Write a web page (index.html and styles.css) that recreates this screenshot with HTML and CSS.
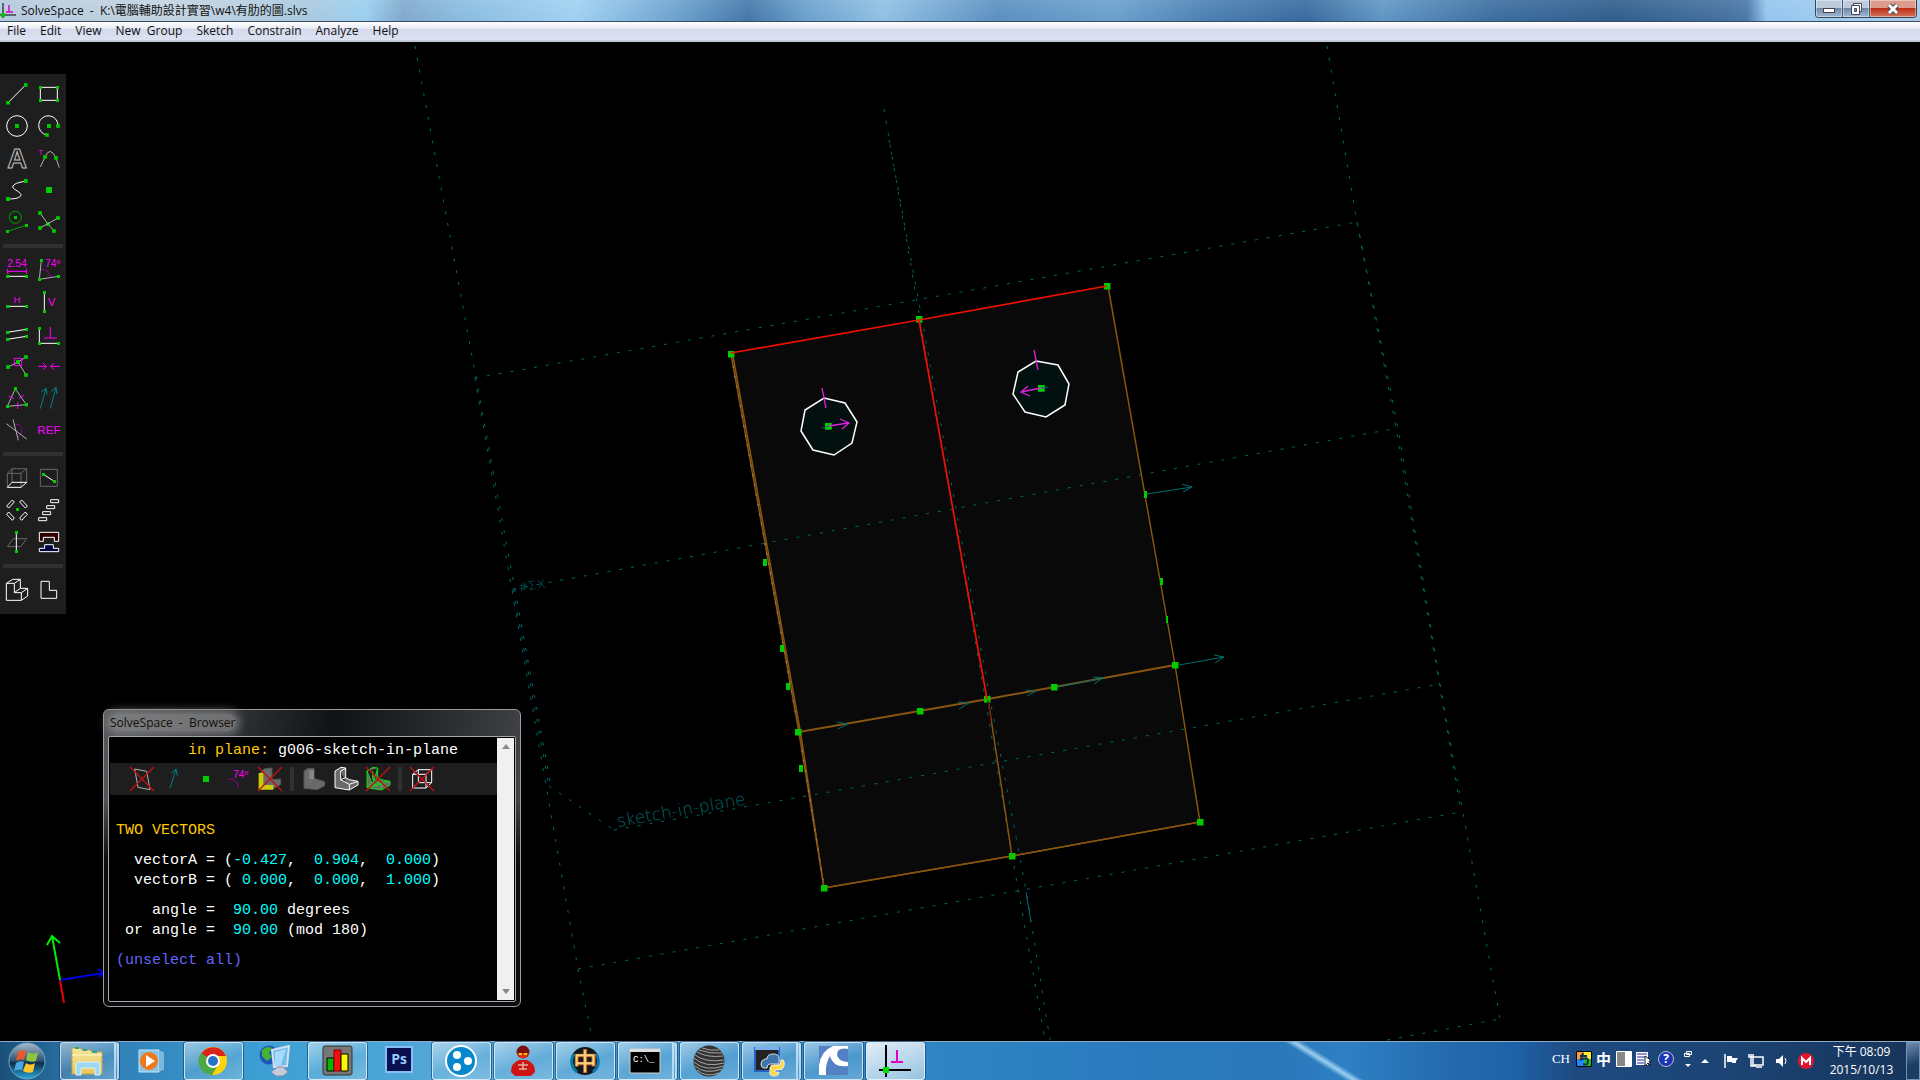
FILE: index.html
```html
<!DOCTYPE html>
<html lang="zh-Hant">
<head>
<meta charset="utf-8">
<meta name="viewport" content="width=device-width, initial-scale=1">
<title>SolveSpace - K:\電腦輔助設計實習\w4\有肋的圖.slvs</title>
<link rel="stylesheet" href="styles.css">
</head>
<body>
<svg class="defs" width="0" height="0" aria-hidden="true">
  <defs>
    <marker id="node" viewBox="0 0 12 12" refX="6" refY="6" markerWidth="11" markerHeight="11" markerUnits="userSpaceOnUse"><path d="M0 0h12v12H0z" fill="#00cc00"/></marker>
    <marker id="pin" viewBox="0 0 8 8" refX="4" refY="4" markerWidth="7" markerHeight="7" markerUnits="userSpaceOnUse"><path d="M0 0h8v8H0z" fill="#00cc00"/></marker>
    <linearGradient id="orb" x2="0" y2="1"><stop offset="0" stop-color="#a9bccb"/><stop offset=".5" stop-color="#2d4f6e"/><stop offset=".55" stop-color="#0b2c49"/><stop offset="1" stop-color="#2ca9dd"/></linearGradient>
    <linearGradient id="folder" x2="0" y2="1"><stop offset="0" stop-color="#f6e79d"/><stop offset="1" stop-color="#e9c75b"/></linearGradient>
  </defs>
</svg>

<header class="titlebar">
  <svg class="app-icon" viewBox="0 0 16 16" aria-hidden="true"><path d="M3 0v15M0 12h16" stroke="#000" fill="none"/><path d="M9 2v7M6 9h7" stroke="#e000c8" stroke-width="1.5" fill="none"/><path d="M1 10h4v4H1z" fill="#0c0"/></svg>
  <h1 class="caption">SolveSpace&nbsp; -&nbsp; K:\電腦輔助設計實習\w4\有肋的圖.slvs</h1>
  <div class="window-controls">
    <button type="button" class="wc" aria-label="Minimize"><svg viewBox="0 0 16 12"><rect x="2.500" y="5.500" width="11" height="4" fill="#fff" stroke="#445"/></svg></button>
    <button type="button" class="wc" aria-label="Restore"><svg viewBox="0 0 16 12"><path d="M5.500 .5h8v8h-8z" fill="#fff" stroke="#445"/><path d="M3.500 2.500h8v9h-8z" fill="#fff" stroke="#445"/><path d="M6.500 5.500h2v3h-2z" fill="#7a8fae" stroke="#445"/></svg></button>
    <button type="button" class="wc wc-close" aria-label="Close"><svg viewBox="0 0 16 12"><path d="M4 2l8 8M12 2l-8 8" stroke="#445" stroke-width="5"/><path d="M4 2l8 8M12 2l-8 8" stroke="#fff" stroke-width="3"/></svg></button>
  </div>
</header>

<nav class="menubar" aria-label="Menu">
  <button type="button">File</button><button type="button">Edit</button><button type="button">View</button><button type="button">New&nbsp; Group</button><button type="button">Sketch</button><button type="button">Constrain</button><button type="button">Analyze</button><button type="button">Help</button>
</nav>

<main class="workspace">
  <svg class="scene" viewBox="0 42 1920 999" preserveAspectRatio="xMinYMin slice" role="img" aria-label="Sketch of ribbed plate">
    <path d="M731 354L1108 286L1200 822L824 888z" fill="#090909"/>
    <g class="axes">
      <path d="M415 46L551 786"/><path d="M475 378L578 969L592 1038"/><path d="M513 589L549 786"/>
      <path d="M475 378L1357 222"/><path d="M513 589L1398 428"/><path d="M614 830L1440 684"/><path d="M578 969L1461 812"/><path d="M1387 1040L1500 1019"/>
      <path d="M1327 46L1357 222L1398 428L1440 684L1500 1019"/><path d="M1357 222L1396 428L1461 812"/>
      <path d="M884 109L920 319L1012 855L1045 1040"/><path d="M889 140L922 319L990 699L1026 890L1050 1040"/>
      <path d="M549 786L614 830"/>
    </g>
    <path d="M1026 892L1031 922" class="teal"/>
    <text class="scene-text" font-size="17" transform="translate(618 827) rotate(-10)">sketch-in-plane</text>
    <g class="scene-text" font-size="12"><text transform="translate(519 592) rotate(-10)">#Σ</text><text transform="translate(538 589) rotate(-10)">X</text></g>
    <g class="edge">
      <path d="M731 354L799 732L824 888L1012 856L1200 822L1175 665L1108 286"/>
      <path d="M824 888L1012 856L1200 822"/>
      <path d="M799 732L988 699L1175 665" stroke-width="2"/><path d="M988 699L1012 856"/><path d="M733 356L801 735L824 888"/>
    </g>
    <path d="M733 366L796 716M802 750L823 880" stroke="#a58a60" stroke-dasharray="2 8" fill="none"/>
    <g fill="#021010" stroke="#fff" stroke-width="1.500">
      <path d="M824 398L845 403L857 422L852 443L834 455L813 450L801 431L805 410z"/>
      <path d="M1036 361L1058 365L1069 384L1065 405L1046 417L1025 412L1013 394L1018 372z"/>
    </g>
    <g fill="#00cc00">
      <path d="M763 559h4v7h-4zM780 645h4v7h-4zM786 683h4v7h-4zM799 765h4v7h-4zM1144 491h3v7h-3zM1160 578h3v7h-3zM1166 616h2v7h-2z"/>
    </g>
    <g class="pins">
      <path d="M731 354L919 319L1107 286L1175 665L1200 822L1012 856L824 888L798 732L920 711L987 699L1054 687"/>
      <path d="M828 426L828 426"/><path d="M1041 388L1041 388"/>
    </g>
    <path d="M731 353L919 320L1107 286M919 320L987 699" fill="none" stroke="#f01000" stroke-width="1.700"/>
    <path d="M988 700L991 722" stroke="#600"/>
    <g class="teal">
      <path d="M1147 494L1192 487M1182 484L1192 487L1183 492"/><path d="M1179 665L1224 657M1214 655L1224 657L1215 663"/>
      <path d="M837 722L848 724L838 729M958 702L969 703L959 709M1026 690L1036 691L1027 696M1058 687L1103 678L1093 677M1103 678L1094 684"/>
      <path d="M822 428L829 426M1041 388L1048 387"/>
    </g>
    <g fill="none" stroke="#e020e0" stroke-width="1.300">
      <path d="M829 426L848 423M840 419L849 423L842 429M822 388L826 408"/>
      <path d="M1041 388L1021 392M1028 386L1021 392L1030 396M1034 350L1038 370"/>
    </g>
    <g fill="none" stroke-width="2"><path d="M60 980L64 1003" stroke="#e00"/><path d="M60 980L104 973M98 969L104 973L99 977" stroke="#0000e0"/><path d="M60 980L52 936M47 945L52 936L60 943" stroke="#00ee00"/></g>
  </svg>

  <div class="toolbar" role="toolbar" aria-label="Sketch tools">
    <div class="tool-group">
      <button type="button" aria-label="Line"><svg viewBox="0 0 96 96"><path class="n" d="M21 74L74 21"/></svg></button>
      <button type="button" aria-label="Rectangle"><svg viewBox="0 0 96 96"><path class="n" d="M22 28H73V67H22V28"/></svg></button>
      <button type="button" aria-label="Circle"><svg viewBox="0 0 96 96"><circle cx="48" cy="48" r="31"/><path class="n" d="M48 48h0"/></svg></button>
      <button type="button" aria-label="Arc"><svg viewBox="0 0 96 96"><path class="n" d="M75 48A29 29 0 1 0 42 75"/><path class="n" d="M48 48h0"/></svg></button>
      <button type="button" aria-label="Text"><svg viewBox="0 0 96 96"><text class="letter" x="48" y="79" font-size="82">A</text></svg></button>
      <button type="button" aria-label="Tangent arc"><svg viewBox="0 0 96 96"><path class="g" d="M22 75L36 45Q51 10 69 48L79 77"/><path class="n bare" d="M36 45L69 48"/><text class="label" x="23" y="38" font-size="24">T</text></svg></button>
      <button type="button" aria-label="Bezier"><svg viewBox="0 0 96 96"><path class="n" d="M21 75C42 75 60 72 60 62C58 52 30 45 36 36C42 26 60 25 74 21"/><path class="n bare" d="M21 75L74 21"/></svg></button>
      <button type="button" aria-label="Point"><svg viewBox="0 0 96 96"><path class="solid" d="M39 39h18v18H39z"/></svg></button>
      <button type="button" aria-label="Toggle construction"><svg viewBox="0 0 96 96"><circle class="green" cx="43" cy="34" r="18"/><path class="n green" d="M19 76L76 58"/><path class="n" d="M43 34h0"/></svg></button>
      <button type="button" aria-label="Split curves"><svg viewBox="0 0 96 96"><path class="n g" d="M21 21L45 54L63 75"/><path class="n g" d="M21 66L75 36"/></svg></button>
    </div>
    <div class="tool-group">
      <button type="button" aria-label="Distance"><svg viewBox="0 0 96 96"><text class="label" x="48" y="39" font-size="30">2.54</text><path class="m" d="M19 52H76M19 44V60M76 44V60"/><path class="n" d="M19 67H76"/></svg></button>
      <button type="button" aria-label="Angle"><svg viewBox="0 0 96 96"><path class="n g" d="M25 19L19 76L76 67"/><path class="m dim" d="M25 46Q46 44 53 70"/><text class="label" x="59" y="40" font-size="30">74º</text></svg></button>
      <button type="button" aria-label="Horizontal"><svg viewBox="0 0 96 96"><text class="label" x="48" y="51" font-size="29">H</text><path class="n" d="M19 61H76"/></svg></button>
      <button type="button" aria-label="Vertical"><svg viewBox="0 0 96 96"><path class="n" d="M34 19V76"/><text class="label" x="56" y="60" font-size="33">V</text></svg></button>
      <button type="button" aria-label="Parallel"><svg viewBox="0 0 96 96"><path class="n" d="M19 43L76 34"/><path class="n" d="M19 64L76 55"/></svg></button>
      <button type="button" aria-label="Perpendicular"><svg viewBox="0 0 96 96"><path class="n" d="M19 31V76H76"/><path class="m" d="M52 27V60M33 60H72"/></svg></button>
      <button type="button" aria-label="Point on line"><svg viewBox="0 0 96 96"><path class="n g" d="M21 51L51 36L75 21"/><path class="n g" d="M51 36L75 75"/><path class="m" d="M40 25H62V47H40z"/></svg></button>
      <button type="button" aria-label="Symmetric"><svg viewBox="0 0 96 96"><path class="m" d="M15 49H40M30 39L40 49L30 59M81 49H53M63 39L53 49L63 59"/></svg></button>
      <button type="button" aria-label="Equal"><svg viewBox="0 0 96 96"><path class="n g" d="M43 20L19 73L76 68L43 20"/><path class="m" d="M23 42L39 50M53 50L70 39M50 61V81"/></svg></button>
      <button type="button" aria-label="Oriented same"><svg viewBox="0 0 96 96"><path class="t" d="M22 80L39 19M24 31L39 19L42 38M52 80L69 16M54 29L69 16L72 36"/></svg></button>
      <button type="button" aria-label="Other angle"><svg viewBox="0 0 96 96"><path class="m dim" d="M39 31C64 27 72 55 48 70"/><path class="g" d="M16 29L77 75M36 16L52 79"/></svg></button>
      <button type="button" aria-label="Reference"><svg viewBox="0 0 96 96"><text class="label" x="48" y="61" font-size="35">REF</text></svg></button>
    </div>
    <div class="tool-group">
      <button type="button" aria-label="Extrude"><svg viewBox="0 0 96 96"><path class="k" d="M19 76V34H60V76M19 34L33 20H77V61M60 34L77 20M33 20V61"/><path d="M19 76H60L77 61H33z"/></svg></button>
      <button type="button" aria-label="Sketch in plane"><svg viewBox="0 0 96 96"><path class="k" d="M22 22H73V73H22z"/><path class="n" d="M31 37L64 58"/></svg></button>
      <button type="button" aria-label="Step rotating"><svg viewBox="0 0 96 96"><path d="M17 36L34 18L40 24L23 42zM56 24L62 18L79 36L73 42zM23 54L40 72L34 79L17 61zM73 54L56 72L62 79L79 61z"/><path class="n" d="M49 46h0"/></svg></button>
      <button type="button" aria-label="Step translating"><svg viewBox="0 0 96 96"><path d="M53 17H77V26H53zM41 35H65V44H41zM29 53H53V62H29zM17 71H41V80H17z"/></svg></button>
      <button type="button" aria-label="Sketch in workplane"><svg viewBox="0 0 96 96"><path class="k" d="M19 62H59L77 38H37z"/><path class="n" d="M46 19V76"/></svg></button>
      <button type="button" aria-label="Assemble"><svg viewBox="0 0 96 96"><path fill="#300000" d="M19 19H77V46H64V34H31V46H19z"/><path fill="#000040" d="M35 56H61V67H77V77H19V67H35z"/></svg></button>
    </div>
    <div class="tool-group">
      <button type="button" aria-label="Nearest isometric view"><svg viewBox="0 0 96 96"><path d="M16 28H40V56H61V79H16zM16 28L35 16H58L40 28M58 16V43L40 56M58 43H80L61 56M80 43V66L61 79"/></svg></button>
      <button type="button" aria-label="Nearest orthographic view"><svg viewBox="0 0 96 96"><path d="M24 22H49V49H71V73H24z"/></svg></button>
    </div>
  </div>

  <section class="browser" aria-label="SolveSpace - Browser">
    <h2 class="browser-title"><span>SolveSpace&nbsp; -&nbsp; Browser</span></h2>
    <div class="browser-frame">
      <div class="browser-body">
        <p class="plane"><b>in plane:</b> g006-sketch-in-plane</p>
        <div class="strip" role="toolbar" aria-label="Visibility">
          <button type="button" aria-label="Workplanes"><svg viewBox="0 0 96 96"><path class="g" d="M26 18L62 25L72 80L36 73z"/><path class="x" d="M12 12L84 84M84 12L12 84"/></svg></button>
          <button type="button" aria-label="Normals"><svg viewBox="0 0 96 96"><path class="t" d="M36 76L54 18M40 31L54 18L58 38"/></svg></button>
          <button type="button" aria-label="Points"><svg viewBox="0 0 96 96"><path class="solid" d="M39 39h18v18H39z"/></svg></button>
          <button type="button" aria-label="Constraints"><svg viewBox="0 0 96 96"><path class="m dim" d="M20 48Q44 48 50 73"/><text class="label" x="56" y="44" font-size="30">74º</text></svg></button>
          <button type="button" aria-label="Faces"><svg viewBox="0 0 96 96"><path class="face" d="M30 18L54 15V50L80 48V64L60 76H16V34z"/><path fill="#cc0" stroke="none" d="M14 30H28V66H58V80H14z"/><path class="x" d="M12 12L84 84M84 12L12 84"/></svg></button>
          <i class="sep"></i>
          <button type="button" aria-label="Shaded"><svg viewBox="0 0 96 96"><path class="face" d="M18 24L30 16L48 16V46L60 50L80 56V68L58 80L18 76z"/><path d="M34 22H48V48H34z" fill="#888" stroke="none"/></svg></button>
          <button type="button" aria-label="Edges"><svg viewBox="0 0 96 96"><path class="face hi" d="M15 24L33 13L47 15V44L58 50L84 55V66L58 81L15 74zM32 24L47 16M32 24V50L58 64V80M32 50L47 44M58 64L84 55"/></svg></button>
          <button type="button" aria-label="Mesh"><svg viewBox="0 0 96 96"><path class="face mesh" d="M15 24L33 13L47 15V44L58 50L84 55V66L58 81L15 74zM15 24L32 66L47 16M32 24V50L58 64V80M15 74L47 44M32 66L84 55M58 64L15 74"/><path class="x" d="M12 12L84 84M84 12L12 84"/></svg></button>
          <i class="sep"></i>
          <button type="button" aria-label="Hidden lines"><svg viewBox="0 0 96 96"><path d="M20 34H60V75H20zM37 20H77V59H37zM20 34L37 20M60 34L77 20M60 75L77 59M20 75L37 59"/><path class="x" d="M12 12L84 84M84 12L12 84"/></svg></button>
        </div>
        <h3 class="heading">TWO VECTORS</h3>
        <div class="rows">
          <p>  vectorA = (<i>-0.427</i>,  <i>0.904</i>,  <i>0.000</i>)</p>
          <p>  vectorB = (<i> 0.000</i>,  <i>0.000</i>,  <i>1.000</i>)</p>
        </div>
        <div class="rows">
          <p>    angle =  <i>90.00</i> degrees</p>
          <p> or angle =  <i>90.00</i> (mod 180)</p>
        </div>
        <a class="unselect" href="#">(unselect all)</a>
      </div>
      <div class="scrollbar" aria-hidden="true"><svg viewBox="0 0 8 5"><path d="M0 5L4 0L8 5z"/></svg><svg viewBox="0 0 8 5"><path d="M0 0L4 5L8 0z"/></svg></div>
    </div>
  </section>
</main>

<footer class="taskbar">
  <button type="button" class="start" aria-label="Start"><svg viewBox="0 0 38 38"><circle cx="19" cy="19" r="18" fill="url(#orb)" stroke="#6fa6cf"/><path d="M10 10Q14 7 18 9L16 18Q12 16 8 19z" fill="#e8592c"/><path d="M20 10Q25 13 30 10L28 19Q23 21 18 18z" fill="#8cc63e"/><path d="M8 21Q12 18 16 20L14 28Q10 27 6 29z" fill="#45a8e0"/><path d="M18 21Q22 24 27 21L25 30Q20 32 15 29z" fill="#fcc62e"/></svg></button>
  <div class="tasks">
    <button type="button" class="task open stacked" aria-label="Explorer"><svg viewBox="0 0 32 32"><path d="M1 3h8l2 2h8l2 2h10v22H1z" fill="url(#folder)" stroke="#c9a548"/><path d="M1 10h30" stroke="#fff6cf"/><path d="M4 3h4M12 5h4M21 7h5" stroke="#2a8" stroke-width="2"/><path d="M5 30V20q0-3 3-3h18q3 0 3 3v10h-5v-7H10v7z" fill="#9fd8f2" stroke="#d8f2ff"/></svg></button>
    <button type="button" class="task" aria-label="Media Player"><svg viewBox="0 0 32 32"><path d="M4 5h20v22H4z" fill="#88c4e8" stroke="#c6e6f8"/><path d="M26 6v20M28 7v18" stroke="#c6e6f8"/><circle cx="14" cy="16" r="9" fill="#f07818"/><path d="M11 10l9 6-9 6z" fill="#fff"/></svg></button>
    <button type="button" class="task open" aria-label="Chrome"><svg viewBox="0 0 32 32"><circle cx="16" cy="16" r="14" fill="#fcd20a"/><path d="M16 16L4 9A14 14 0 0 1 29 11H16z" fill="#d9251d"/><path d="M16 16L4 8A14 14 0 0 0 15 30L21 20z" fill="#4ea845"/><circle cx="16" cy="16" r="7" fill="#fff"/><circle cx="16" cy="16" r="5" fill="#2872c4"/></svg></button>
    <button type="button" class="task" aria-label="Network"><svg viewBox="0 0 32 32"><circle cx="10" cy="10" r="9.500" fill="#1b56bf"/><path d="M3 5q5-5 10-2l-3 5 3 4-5 4-5-5z" fill="#44b532"/><path d="M13 5l17-4-2 20-13 1z" fill="#6ebcf0" stroke="#dde" stroke-width="2"/><path d="M16 7l11-3-5 16-6 1z" fill="#a5dafa"/><path d="M19 22h5l5 5-5 4h-7l-5-4z" fill="#c9c9dc" stroke="#88a"/></svg></button>
    <button type="button" class="task open" aria-label="Charts"><svg viewBox="0 0 32 32"><rect x="2" y="1" width="29" height="29" rx="2" fill="#777" stroke="#333"/><path d="M6 13h7v13H6z" fill="#0b0" stroke="#000"/><path d="M13 5h7v21h-7z" fill="#f01010" stroke="#800"/><path d="M20 9h7v17h-7z" fill="#fafa00" stroke="#000"/></svg></button>
    <button type="button" class="task" aria-label="Photoshop"><svg viewBox="0 0 32 32"><path d="M3 2h26v25H3z" fill="#0a0f4f" stroke="#88bdf5" stroke-width="2"/><text x="16" y="19" font-size="14" font-weight="bold" text-anchor="middle" fill="#93cbff">Ps</text></svg></button>
    <button type="button" class="task open" aria-label="Media app"><svg viewBox="0 0 32 32"><circle cx="16" cy="16" r="15" fill="#0788cc" stroke="#fff" stroke-width="2"/><g fill="#fff"><circle cx="12" cy="10" r="4"/><circle cx="23" cy="16" r="4"/><circle cx="12" cy="22" r="4"/></g></svg></button>
    <button type="button" class="task open" aria-label="Messenger"><svg viewBox="0 0 32 32"><path d="M4 27q0-9 8-12h8q8 3 8 12l-4 4H8z" fill="#cf1414"/><circle cx="16" cy="7" r="6.500" fill="#7c1010"/><path d="M10 8h12l-3 5h-6z" fill="#e03010"/><path d="M12 9h3M17 9h3" stroke="#ff0" stroke-width="1.500"/><path d="M11 20h10M16 17v8M12 24h8" stroke="#e0b0a0" stroke-width="1.500"/></svg></button>
    <button type="button" class="task open" aria-label="Game"><svg viewBox="0 0 32 32"><circle cx="16" cy="16" r="14" fill="#101820"/><path d="M5 9a13 13 0 0 0 3 18M27 9a13 13 0 0 1-3 18" stroke="#0b78a8" stroke-width="3" fill="none"/><text x="16" y="25" font-size="24" font-weight="bold" text-anchor="middle" fill="#ffd27c" stroke="#b05818" stroke-width=".7">中</text></svg></button>
    <button type="button" class="task open stacked" aria-label="Command Prompt"><svg viewBox="0 0 32 32"><path d="M1 4h30v24H1z" fill="#000" stroke="#ccc"/><path d="M1 4h30v3H1z" fill="#ddd"/><text x="4" y="17" font-size="9" font-family="Liberation Mono" fill="#fff">C:\_</text></svg></button>
    <button type="button" class="task open" aria-label="Rhino sphere"><svg viewBox="0 0 32 32"><circle cx="16" cy="16" r="15.500" fill="#333"/><g fill="none" stroke="#a4a4a4"><path d="M6 5Q17 9 29 8M4 7Q15 13 30 11M2 10Q13 18 31 15M1 13Q12 23 31 18M1 17Q12 27 31 21M2 21Q12 30 29 24M4 25Q13 33 26 28M9 3Q17 6 26 5"/></g></svg></button>
    <button type="button" class="task open stacked" aria-label="Python"><svg viewBox="0 0 32 32"><path d="M2 3h24v23H2z" fill="#222" stroke="#2a61c8" stroke-width="2"/><path d="M2 2h24v3H2z" fill="#7cb0ee"/><path d="M14 14q0-5 6-5t6 4v6h-9q-3 0-3 4h-3q-3 0-3-4t4-5z" fill="#3d76ac" stroke="#ddd"/><path d="M17 23q0-3 4-3h5q2 0 2-5h2q2 2 1 6t-5 4h-4v2h4q0 4-5 4t-4-4z" fill="#ffd847" stroke="#eee"/></svg></button>
    <button type="button" class="task open" aria-label="CAD"><svg viewBox="0 0 32 32"><rect x="2" y="1" width="29" height="29" rx="2" fill="#5480c4"/><path d="M2 30V20Q4 6 16 1H31V4Q20 2 20 10Q22 17 31 17V21Q16 23 13 11Q8 19 9 30z" fill="#fff"/><path d="M2 19Q3 5 13 1H2z" fill="#5480c4"/></svg></button>
    <button type="button" class="task open active" aria-label="SolveSpace"><svg viewBox="0 0 32 32"><path d="M7 0v32M0 25h32" stroke="#000" stroke-width="2"/><path d="M18 5v12M12 17h12" stroke="#e000c8" stroke-width="2"/><path d="M4 22h6v6H4z" fill="#0d0"/></svg></button>
  </div>
  <div class="tray">
    <span class="lang">CH</span>
    <div class="ime">
      <svg viewBox="0 0 16 16"><path d="M.5 .5h15v15H.5z" fill="#f93" stroke="#000"/><path d="M1 8h7v7H1z" fill="#28f"/><path d="M8 8h7v7H8z" fill="#2b2"/><path d="M8 1h7v7H8z" fill="#fe3"/><path d="M4 5h7M4 9q8-4 8 1t-5 3M7 2L5 8" stroke="#135" stroke-width="2" fill="none"/></svg>
      <span>中</span>
      <svg viewBox="0 0 16 16"><path d="M.5 .5h15v15H.5z" fill="#888" stroke="#fff"/><path d="M9 1h6v14H9z" fill="#fff"/></svg>
      <svg viewBox="0 0 16 16"><path d="M0 1h12v13H0z" fill="#fff"/><path d="M1 3h10M1 6h8M1 9h7M1 12h7" stroke="#22a" stroke-width="1"/><path d="M9 5v10l3-3 3 3-2-5h3z" fill="#fff" stroke="#123"/></svg>
    </div>
    <svg class="help" viewBox="0 0 16 16"><circle cx="8" cy="8" r="7.500" fill="#1a35b8" stroke="#bbc"/><text x="8" y="12" font-size="12" font-weight="bold" text-anchor="middle" fill="#fff">?</text></svg>
    <svg class="langopt" viewBox="0 0 8 18"><path d="M2.500 1.500h5v3h-5zM.5 3.500h5v3h-5z" fill="#25497a" stroke="#fff"/><path d="M1 14h6l-3 3z" fill="#fff"/></svg>
    <svg class="up" viewBox="0 0 8 4"><path d="M0 4L4 0L8 4z" fill="#fff"/></svg>
    <div class="notify">
      <svg viewBox="0 0 16 16"><path d="M2 1v14" stroke="#fff" stroke-width="1.500"/><path d="M4 3h5v6H4zM9 5h6l-2 3v2H9z" fill="#fff"/></svg>
      <svg viewBox="0 0 16 16"><path d="M5 4h10v8H5zM8 14h6M3 1v12h5M1 1v3h4V1" fill="none" stroke="#fff" stroke-width="1.500"/></svg>
      <svg viewBox="0 0 16 16"><path d="M3 6h3l4-4v12l-4-4H3z" fill="#fff"/><path d="M12 5q2 3 0 6" stroke="#fff" fill="none"/></svg>
      <svg viewBox="0 0 16 16"><circle cx="8" cy="8" r="8" fill="#e0142c"/><path d="M4 12V5l4 4 4-4v7" stroke="#fff" stroke-width="2" fill="none"/></svg>
    </div>
    <div class="clock"><time>下午 08:09</time><time>2015/10/13</time></div>
    <button type="button" class="show-desktop" aria-label="Show desktop"></button>
  </div>
</footer>
</body>
</html>
```
FILE: styles.css
```css
* { box-sizing: border-box; }

body {
  margin: 0;
  height: 100vh;
  display: flex;
  flex-direction: column;
  overflow: hidden;
  background: #000;
  font: 12px/16px "Open Sans", "Noto Sans CJK TC", sans-serif;
  color: #111;
}

button {
  margin: 0;
  padding: 0;
  border: 0;
  background: none;
  font: inherit;
  color: inherit;
}

svg { display: block; }
.defs { position: absolute; }

/* title bar */
.titlebar {
  flex: none;
  height: 21px;
  display: flex;
  align-items: center;
  background:
    linear-gradient(to bottom, rgba(255, 255, 255, .1), rgba(255, 255, 255, 0)),
    linear-gradient(to right, #b3c9dd 0, #c3d3e0 9%, #a9c8de 16%, #9ad0f0 19%, #7fa8cc 21%, #89bce0 24%, #9fd1f2 30%, #6ea4d0 35%, #4377aa 39%, #6aa0cd 42%, #8fc0e4 46%, #5a8fc0 52%, #6aa0cd 58%, #4a7fb2 63%, #376a9e 68%, #5f96c4 72%, #3a6c9f 78%, #2f5d8c 84%, #44709f 90%, #4a78aa 91%, #93c4ee 92%, #a4cdf0 97%, #a8c8e4 100%);
}
.app-icon { width: 16px; height: 16px; flex: none; }
.caption {
  flex: 1;
  margin: 0;
  padding-left: 5px;
  font-size: 12px;
  font-weight: 400;
  white-space: nowrap;
}
.window-controls {
  flex: none;
  align-self: flex-start;
  display: flex;
  height: 18px;
  margin-right: 3px;
  border: 1px solid #33455c;
  border-top: 0;
  border-radius: 0 0 4px 4px;
  overflow: hidden;
}
.wc {
  width: 27px;
  display: flex;
  justify-content: center;
  align-items: center;
  border-right: 1px solid #46586f;
  background: linear-gradient(to bottom, #bccbdc 0 45%, #7088a8 50%, #a3b9d2);
  box-shadow: inset 0 0 0 1px rgba(255, 255, 255, .4);
}
.wc svg { width: 16px; height: 12px; }
.wc-close {
  width: 46px;
  border-right: 0;
  background: linear-gradient(to bottom, #dc9c8c 0 45%, #bd3018 50%, #d4745c);
}

/* menu bar */
.menubar {
  flex: none;
  height: 21px;
  display: flex;
  align-items: center;
  border-top: 1px solid #3a4a60;
  border-bottom: 2px solid #c3cbdb;
  background: linear-gradient(to bottom, #fff 0, #e8ecf5 35%, #d4daec 40%, #dde2f2);
}
.menubar button { padding: 0 7px; white-space: nowrap; line-height: 16px; }

/* drawing area */
.workspace {
  flex: 1;
  min-height: 0;
  position: relative;
  overflow: hidden;
}
.scene { width: 100%; height: 100%; }
.axes path { fill: none; stroke: #006868; stroke-dasharray: 3 9; }
.scene-text { fill: #006868; font-family: "DejaVu Sans", sans-serif; font-weight: 200; }
.edge { fill: none; stroke: #885510; stroke-width: 1.5; }
.pins path { fill: none; stroke: none; marker: url(#pin); }
.teal { fill: none; stroke: #006c6c; }

/* tool palette */
.toolbar {
  position: absolute;
  left: 0;
  top: 32px;
  padding: 4px 1px 8px;
  background: #1e1e1e;
}
.tool-group { display: grid; grid-template-columns: 32px 32px; }
.tool-group + .tool-group { padding-top: 16px; background: linear-gradient(#303030, #303030) 2px 6px / 60px 4px no-repeat; }
.tool-group svg, .strip svg {
  width: 32px;
  height: 32px;
  fill: none;
  stroke: #fff;
  stroke-width: 3;
}
.n { marker-start: url(#node); marker-end: url(#node); }
path.n:not([d*="C"]) { marker-mid: url(#node); }
svg .bare { stroke: none; }
svg .g { stroke: #b0b0b0; }
svg .k { stroke: #686868; }
svg .m { stroke: #f0f; }
svg .dim { stroke: #a000a0; }
svg .t { stroke: #008080; }
svg .green { stroke: #00a000; }
svg .x { stroke: #c01010; stroke-width: 4; }
svg .solid { fill: #0c0; stroke: none; }
svg .label { fill: #f0f; stroke: none; text-anchor: middle; font-family: "Liberation Sans", sans-serif; }
svg .letter { fill: none; stroke: #c0c0c0; stroke-width: 3; text-anchor: middle; font-family: "Liberation Sans", sans-serif; font-weight: 700; }
svg .face { fill: #6a6a6a; stroke: #555; }
svg .hi { stroke: #fff; }
svg .mesh { stroke: #1d1; }

/* property browser window */
.browser {
  position: absolute;
  left: 103px;
  top: 667px;
  width: 418px;
  height: 298px;
  display: flex;
  flex-direction: column;
  padding: 0 4px 4px;
  border: 1px solid #9a9ca0;
  border-radius: 6px;
  background: linear-gradient(to bottom, transparent 90px, #0c0d10 150px), linear-gradient(100deg, #55585c 0, #101216 50%, #2c2e32 75%, #4c4e51 100%);
}
.browser-title {
  flex: none;
  height: 26px;
  margin: 0;
  padding: 5px 2px;
  font-size: 12px;
  font-weight: 400;
}
.browser-title span { border-radius: 8px; background: rgba(140, 140, 140, .7); box-shadow: 0 0 8px 4px rgba(140, 140, 140, .7); }
.browser-frame {
  flex: 1;
  display: flex;
  border: 1px solid #a4a6aa;
  border-radius: 2px;
  background: #000;
  padding: 1px;
}
.browser-body {
  flex: 1;
  font: 15px/20px "Liberation Mono", monospace;
  color: #fff;
}
.plane { margin: 0; height: 25px; padding-left: 78px; line-height: 26px; }
.plane b { font-weight: 400; color: #ffc800; }
.strip { height: 32px; display: flex; padding-left: 16px; background: #1e1e1e; }
.sep { width: 12px; background: linear-gradient(#303030, #303030) center / 4px 24px no-repeat; }
.heading { margin: 26px 0 10px 6px; font: inherit; color: #ffc800; }
.rows { margin: 0 0 10px 6px; white-space: pre-line; }
.rows p { margin: 0; white-space: pre; }
.rows { display: grid; white-space: normal; }
.rows i { font-style: normal; color: #00ffff; }
.unselect { display: block; margin-left: 6px; color: #6464ff; text-decoration: none; }
.scrollbar {
  flex: none;
  width: 17px;
  display: flex;
  flex-direction: column;
  justify-content: space-between;
  align-items: center;
  padding: 6px 0;
  background: #f0f0f0;
}
.scrollbar svg { width: 8px; height: 5px; fill: #888; }

/* taskbar */
.taskbar {
  flex: none;
  height: 39px;
  display: flex;
  border-top: 1px solid #8eabc8;
  background:
    linear-gradient(32deg, transparent 44%, rgba(190, 235, 255, .75) 50%, transparent 56%) 70% 0 / 100px 100% no-repeat,
    linear-gradient(to right, #1a5078 0, #2f7db5 5%, #3da0d4 14%, #55a8d8 24%, #3a92cc 38%, #2f86c4 48%, #2a7cbe 58%, #2a77ba 67%, #2e80c4 70%, #2468ac 76%, #1e61a8 79%, #1e4a80 82%, #1c4474 90%, #16345a 100%);
}
.taskbar { background-blend-mode: normal; }
.start { width: 60px; flex: none; display: flex; justify-content: center; padding-right: 6px; }
.start svg { width: 38px; height: 38px; }
.tasks { flex: 1; display: flex; gap: 3px; min-width: 0; }
.task {
  flex: 0 1 59px;
  display: flex;
  justify-content: center;
  align-items: center;
  height: 38px;
  padding-right: 2px;
}
.task svg { width: 32px; height: 32px; }
.open {
  border: 1px solid rgba(225, 243, 255, .8);
  border-radius: 3px;
  background: linear-gradient(160deg, rgba(255, 255, 255, .5), rgba(255, 255, 255, .12) 55%, rgba(255, 255, 255, .25));
  box-shadow: 0 0 0 1px rgba(20, 60, 100, .6);
}
.stacked { border-right: 5px double rgba(200, 230, 250, .8); }
.active { background: linear-gradient(160deg, rgba(255, 255, 255, .85), rgba(255, 255, 255, .5)); }
.tray { flex: none; display: flex; align-items: center; color: #fff; }
.lang { font: 13px/16px "Liberation Serif", serif; margin: 0 6px 4px 0; }
.ime { display: flex; gap: 4px; align-items: center; margin-bottom: 4px; }
.ime span { font-size: 15px; font-weight: 700; width: 16px; }
.ime svg, .help, .notify svg { width: 16px; height: 16px; }
.help { margin: 0 10px 4px 6px; }
.langopt { width: 8px; height: 18px; margin: 0 9px 4px 0; }
.up { width: 8px; height: 4px; margin-right: 14px; }
.notify { display: flex; gap: 9px; }
.clock { width: 92px; padding-left: 3px; text-align: center; font-size: 12px; line-height: 18px; }
.clock time { display: block; white-space: nowrap; }
.show-desktop {
  align-self: stretch;
  width: 14px;
  border: 1px solid #6f93b8;
  background: linear-gradient(160deg, #6f8cae, #1c3c64 60%);
}
```
